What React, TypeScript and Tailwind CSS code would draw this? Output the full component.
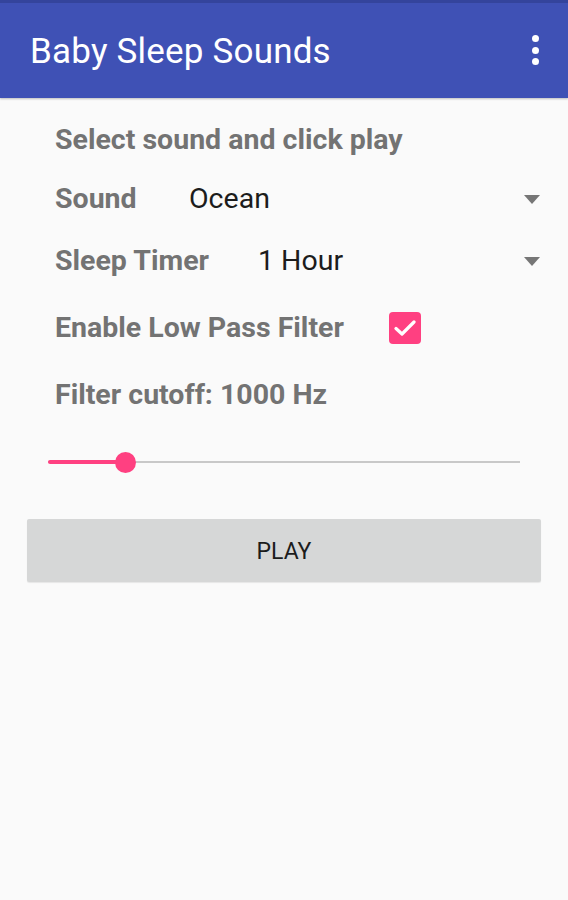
import React from 'react'

const font = { fontFamily: 'Roboto, "Noto Sans", sans-serif' }

const Caret = () => (
  <svg width="16" height="9" viewBox="0 0 16 9" className="shrink-0">
    <path d="M0 0 H16 L8 9 Z" fill="#767676" />
  </svg>
)

const App = () => {
  return (
    <div className="w-[568px] h-[900px] bg-[#fafafa] overflow-hidden" style={font}>
      <header className="relative h-[98px] bg-[#3f51b5] shadow-[0_1px_2px_rgba(0,0,0,0.25)]">
        <div className="h-[3px] bg-[#34449c]" />
        <div className="flex items-center justify-between h-[95px] pl-[30px] pr-[29px]">
          <h1 className="text-[35px] text-white leading-none tracking-[0.2px] mt-[2px]">Baby Sleep Sounds</h1>
          <div className="flex flex-col gap-[4.5px] items-center -mt-[1px]">
            <span className="block w-[7px] h-[7px] rounded-full bg-white" />
            <span className="block w-[7px] h-[7px] rounded-full bg-white" />
            <span className="block w-[7px] h-[7px] rounded-full bg-white" />
          </div>
        </div>
      </header>

      <main className="pt-[13px]">
        <div className="pl-[55px] pr-[28px] text-[#737373] font-bold text-[28.5px]">
          <div className="h-[58px] flex items-center">Select sound and click play</div>

          <div className="h-[60px] flex items-center">
            <span className="w-[134px]">Sound</span>
            <span className="flex-1 font-normal text-[#1c1c1c]">Ocean</span>
            <Caret />
          </div>

          <div className="h-[64px] flex items-center">
            <span className="w-[203px]">Sleep Timer</span>
            <span className="flex-1 font-normal text-[#1c1c1c]">1 Hour</span>
            <Caret />
          </div>

          <div className="h-[70px] flex items-center">
            <span className="w-[334px]">Enable Low Pass Filter</span>
            <span className="w-[32px] h-[32px] rounded-[4px] bg-[#ff4081] flex items-center justify-center">
              <svg width="22" height="18" viewBox="0 0 22 18">
                <path d="M2 9.5 L8 15 L20 3" fill="none" stroke="white" strokeWidth="3.2" strokeLinecap="round" strokeLinejoin="round" />
              </svg>
            </span>
          </div>

          <div className="h-[66px] flex items-center pb-[1px]">Filter cutoff: 1000 Hz</div>
        </div>

        <div className="h-[66px] flex items-center pl-[48px] pr-[48px]">
          <div className="relative flex-1 h-[3px] flex items-center">
            <div className="absolute inset-x-0 h-[2px] bg-[#c8c8c8]" />
            <div className="absolute left-0 w-[78px] h-[4px] rounded-full bg-[#ff4081]" />
            <div className="absolute left-[67px] w-[21px] h-[21px] rounded-full bg-[#ff4081]" />
          </div>
        </div>

        <div className="px-[27px] pt-[24px]">
          <button className="w-full h-[63px] pt-[4px] bg-[#d6d7d7] rounded-[2px] text-[23px] text-[#1c1c1c] shadow-[0_1px_1px_rgba(0,0,0,0.08)]">
            PLAY
          </button>
        </div>
      </main>
    </div>
  )
}

export default App
